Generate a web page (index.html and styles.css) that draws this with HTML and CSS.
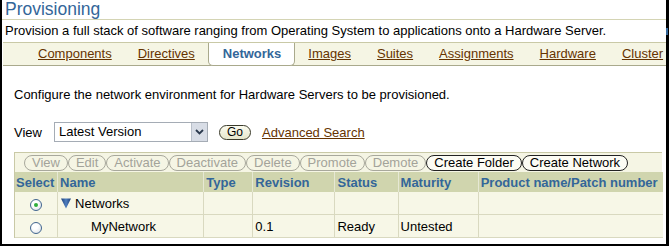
FILE: index.html
```html
<!DOCTYPE html>
<html lang="en">
<head>
    <meta charset="UTF-8">
    <title>Provisioning - Networks</title>
    <link rel="stylesheet" href="styles.css">
</head>
<body>
    <div class="frame">
        <h1 class="title">Provisioning</h1>
        <p class="intro">Provision a full stack of software ranging from Operating System to applications onto a Hardware Server.</p>

        <nav class="tabs">
            <a class="tab" href="#">Components</a>
            <a class="tab" href="#">Directives</a>
            <span class="tab active">Networks</span>
            <a class="tab" href="#">Images</a>
            <a class="tab" href="#">Suites</a>
            <a class="tab" href="#">Assignments</a>
            <a class="tab" href="#">Hardware</a>
            <a class="tab" href="#">Cluster</a>
        </nav>

        <div class="content">
            <p class="lead">Configure the network environment for Hardware Servers to be provisioned.</p>

            <div class="view-row">
                <span class="view-label">View</span>
                <div class="select">
                    <span class="select-text">Latest Version</span>
                    <span class="select-btn">
                        <svg width="9" height="6" viewBox="0 0 9 6"><path d="M1 1 L4.5 4.5 L8 1" fill="none" stroke="#2b3a4e" stroke-width="1.8"/></svg>
                    </span>
                </div>
                <button class="go">Go</button>
                <a class="link" href="#">Advanced Search</a>
            </div>

            <div class="table-wrap">
                <div class="toolbar">
                    <button class="btn" disabled>View</button>
                    <button class="btn" disabled>Edit</button>
                    <button class="btn" disabled>Activate</button>
                    <button class="btn" disabled>Deactivate</button>
                    <button class="btn" disabled>Delete</button>
                    <button class="btn" disabled>Promote</button>
                    <button class="btn" disabled>Demote</button>
                    <button class="btn">Create Folder</button>
                    <button class="btn">Create Network</button>
                </div>
                <table class="grid">
                    <colgroup>
                        <col class="c-select">
                        <col class="c-name">
                        <col class="c-type">
                        <col class="c-rev">
                        <col class="c-status">
                        <col class="c-mat">
                        <col class="c-prod">
                    </colgroup>
                    <thead>
                        <tr>
                            <th class="first">Select</th>
                            <th>Name</th>
                            <th>Type</th>
                            <th>Revision</th>
                            <th>Status</th>
                            <th>Maturity</th>
                            <th>Product name/Patch number</th>
                        </tr>
                    </thead>
                    <tbody>
                        <tr>
                            <td class="first center"><span class="radio checked"></span></td>
                            <td>
                                <span class="folder">
                                    <svg class="tri" width="10" height="11" viewBox="0 0 10 11">
                                        <defs>
                                            <linearGradient id="tg" x1="0" y1="0" x2="1" y2="0">
                                                <stop offset="0" stop-color="#1d3f7a"/>
                                                <stop offset="0.5" stop-color="#4f7fbf"/>
                                                <stop offset="1" stop-color="#1d3f7a"/>
                                            </linearGradient>
                                        </defs>
                                        <path d="M0 0.5 L10 0.5 L5 10.5 Z" fill="url(#tg)"/>
                                    </svg>
                                    Networks
                                </span>
                            </td>
                            <td></td>
                            <td></td>
                            <td></td>
                            <td></td>
                            <td></td>
                        </tr>
                        <tr>
                            <td class="first center"><span class="radio"></span></td>
                            <td class="indent">MyNetwork</td>
                            <td></td>
                            <td>0.1</td>
                            <td>Ready</td>
                            <td>Untested</td>
                            <td></td>
                        </tr>
                    </tbody>
                </table>
            </div>
        </div>
    </div>
    <span class="edge-mark"></span>
</body>
</html>
```

FILE: styles.css
```css
body {
    margin: 0;
    font-family: "Liberation Sans", Arial, sans-serif;
    font-size: 13px;
    color: #000;
    background: #fff;
    position: relative;
}

.frame {
    box-sizing: border-box;
    width: 669px;
    height: 246px;
    border-left: 2px solid #000;
    border-right: 3px solid #000;
    border-bottom: 2px solid #000;
    overflow: hidden;
}

.title {
    margin: 0;
    padding-left: 3px;
    font-size: 17.5px;
    font-weight: normal;
    line-height: 19px;
    color: #336699;
    border-bottom: 1px solid #d4d4b4;
}

.intro {
    margin: 0;
    padding-left: 3px;
    line-height: 22px;
    white-space: nowrap;
}

/* tab strip */
.tabs {
    display: flex;
    margin-left: 1px;
    padding-left: 22px;
    height: 22px;
    background: #f5f5e4;
    border-top: 1px solid #c9c9a6;
    border-bottom: 1px solid #a9a98c;
    white-space: nowrap;
}

.tab {
    padding: 0 12px;
    border-left: 1px solid transparent;
    border-right: 1px solid transparent;
    line-height: 22px;
    color: #663300;
    text-decoration: underline;
}

.tab.active {
    padding: 0 13px 0 14px;
    height: 22px;
    background: #fff;
    color: #336699;
    font-weight: bold;
    text-decoration: none;
    border-left-color: #a9a98c;
    border-right-color: #a9a98c;
    border-bottom: 1px solid #a9a98c;
    border-radius: 0 0 5px 5px;
}

.content {
    padding-left: 12px;
    padding-right: 4px;
}

.lead {
    margin: 21px 0 0;
    line-height: 15px;
}

.view-row {
    display: flex;
    align-items: center;
    height: 20px;
    margin-top: 20px;
}

.view-label {
    width: 40px;
}

.select {
    box-sizing: border-box;
    display: flex;
    width: 154px;
    height: 20px;
    border: 1px solid #a5acb5;
    background: #fff;
}

.select-text {
    flex: 1;
    padding-left: 4px;
    line-height: 18px;
}

.select-btn {
    display: flex;
    align-items: center;
    justify-content: center;
    width: 15px;
    background: #d8dde6;
    border-left: 1px solid #b9c0ca;
}

.go {
    box-sizing: border-box;
    margin-left: 11px;
    height: 15px;
    padding: 0 7px;
    font-family: inherit;
    font-size: 12px;
    line-height: 13px;
    color: #000;
    background: linear-gradient(#fbfbef, #e6e6cc);
    border: 1px solid #3a3a2a;
    border-radius: 8px;
}

.link {
    margin-left: 11px;
    color: #663300;
    text-decoration: underline;
}

/* results table */
.table-wrap {
    margin-top: 10px;
    border-left: 1px solid #c9c9a6;
    border-top: 1px solid #c9c9a6;
}

.toolbar {
    display: flex;
    height: 19px;
    padding: 2px 0 0 9px;
    box-sizing: border-box;
    background: #f5f5e4;
}

.btn {
    box-sizing: border-box;
    height: 16px;
    margin: 0;
    padding: 0 7px;
    font-family: inherit;
    font-size: 13px;
    line-height: 14px;
    color: #000;
    background: #fcfcf4;
    border: 1px solid #222;
    border-radius: 8px;
    white-space: nowrap;
}

.btn:disabled {
    color: #a3a39a;
    background: transparent;
    border-color: #a8a89c;
}

.grid {
    width: 648px;
    table-layout: fixed;
    border-collapse: separate;
    border-spacing: 0;
}

.c-select { width: 42px; }
.c-name { width: 146px; }
.c-type { width: 49px; }
.c-rev { width: 82px; }
.c-status { width: 63px; }
.c-mat { width: 80px; }
.c-prod { width: 185px; }

.grid th {
    height: 20px;
    padding: 0 0 0 2px;
    text-align: left;
    font-weight: bold;
    color: #336699;
    background: #d0d5ae;
    border-left: 1px solid #e6e8d4;
    white-space: nowrap;
    overflow: hidden;
}

.grid td {
    height: 21px;
    padding: 1px 0 0 2px;
    background: #f7f7e7;
    border-left: 1px solid #d9d9c0;
    border-bottom: 1px solid #d9d9c0;
    white-space: nowrap;
}

.grid th.first,
.grid td.first {
    border-left: none;
    padding-left: 1px;
}

.grid td.center {
    text-align: center;
    padding: 0;
}

.grid td.indent {
    padding-left: 33px;
}

.folder {
    display: inline-flex;
    align-items: center;
    gap: 4px;
    margin-left: 1px;
}

.radio {
    display: inline-block;
    box-sizing: border-box;
    width: 12px;
    height: 12px;
    margin-top: 2px;
    border: 1px solid #41658f;
    border-radius: 50%;
    background: radial-gradient(circle at 40% 35%, #fff 30%, #d6dce4 100%);
    vertical-align: middle;
    position: relative;
}

.radio.checked::after {
    content: "";
    position: absolute;
    left: 3px;
    top: 3px;
    width: 4px;
    height: 4px;
    border-radius: 50%;
    background: #2fae3a;
}

.edge-mark {
    position: absolute;
    left: 666px;
    top: 28px;
    width: 2px;
    height: 7px;
    background: #336699;
}
```
